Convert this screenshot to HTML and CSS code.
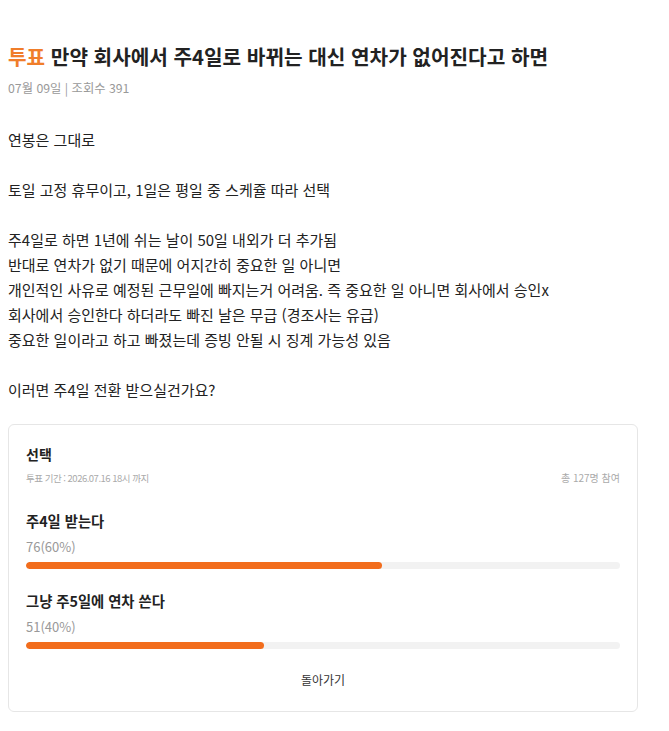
FILE: index.html
```html
<!DOCTYPE html>
<html lang="ko">
<head>
<meta charset="utf-8">
<title>투표</title>
<link rel="stylesheet" href="styles.css">
</head>
<body>
<article class="post">
  <h1 class="post-title"><span class="tag">투표</span> 만약 회사에서 주4일로 바뀌는 대신 연차가 없어진다고 하면</h1>
  <div class="post-meta">07월 09일 | 조회수 391</div>

  <div class="post-body">
    <p>연봉은 그대로</p>
    <p>토일 고정 휴무이고, 1일은 평일 중 스케쥴 따라 선택</p>
    <p>주4일로 하면 1년에 쉬는 날이 50일 내외가 더 추가됨<br>
    반대로 연차가 없기 때문에 어지간히 중요한 일 아니면<br>
    개인적인 사유로 예정된 근무일에 빠지는거 어려움. 즉 중요한 일 아니면 회사에서 승인x<br>
    회사에서 승인한다 하더라도 빠진 날은 무급 (경조사는 유급)<br>
    중요한 일이라고 하고 빠졌는데 증빙 안될 시 징계 가능성 있음</p>
    <p>이러면 주4일 전환 받으실건가요?</p>
  </div>

  <section class="poll">
    <h2 class="poll-title">선택</h2>
    <div class="poll-info">
      <span class="poll-period">투표 기간 : 2026.07.16 18시 까지</span>
      <span>총 127명 참여</span>
    </div>

    <div class="option">
      <div class="option-label">주4일 받는다</div>
      <div class="option-count">76(60%)</div>
      <div class="bar"><div class="bar-fill" style="width:60%"></div></div>
    </div>

    <div class="option">
      <div class="option-label">그냥 주5일에 연차 쓴다</div>
      <div class="option-count">51(40%)</div>
      <div class="bar"><div class="bar-fill" style="width:40%"></div></div>
    </div>

    <div class="poll-back">돌아가기</div>
  </section>
</article>
</body>
</html>
```

FILE: styles.css
```css
* {
  box-sizing: border-box;
}

body {
  margin: 0;
  background: #fff;
  color: #222;
  font-family: "Noto Sans CJK KR", "Noto Sans", sans-serif;
}

.post {
  padding: 43px 8px 0 8px;
}

.post-title {
  margin: 0;
  font-size: 20.2px;
  line-height: 28px;
  font-weight: 700;
  color: #222;
}

.tag {
  color: #f07d2a;
}

.post-meta {
  margin-top: 8px;
  font-size: 12.3px;
  line-height: 18px;
  color: #999;
}

.post-body {
  margin-top: 30px;
  font-size: 15px;
  line-height: 25px;
  color: #222;
}

.post-body p {
  margin: 0 0 25px 0;
}

.post-body p:last-child {
  margin-bottom: 0;
}

.poll {
  margin-top: 22px;
  width: 630px;
  border: 1px solid #e6e6e6;
  border-radius: 6px;
  padding: 19px 17px 22px 17px;
}

.poll-title {
  margin: 0;
  font-size: 14px;
  line-height: 20px;
  font-weight: 700;
  color: #222;
}

.poll-info {
  margin-top: 6px;
  display: flex;
  justify-content: space-between;
  font-size: 10px;
  line-height: 16px;
  color: #aaa;
}

.poll-period {
  font-size: 9.5px;
  letter-spacing: -0.5px;
}

.option {
  margin-top: 24px;
}

.option + .option {
  margin-top: 21px;
}

.option-label {
  font-size: 14.3px;
  line-height: 22px;
  font-weight: 700;
  color: #222;
}

.option-count {
  margin-top: 6px;
  font-size: 13px;
  line-height: 18px;
  color: #999;
}

.bar {
  margin-top: 6px;
  height: 7px;
  border-radius: 4px;
  background: #f2f2f2;
  overflow: hidden;
}

.bar-fill {
  height: 100%;
  border-radius: 4px;
  background: #f26d1d;
}

.poll-back {
  margin-top: 22px;
  text-align: center;
  font-size: 12px;
  line-height: 18px;
  color: #333;
}
```
